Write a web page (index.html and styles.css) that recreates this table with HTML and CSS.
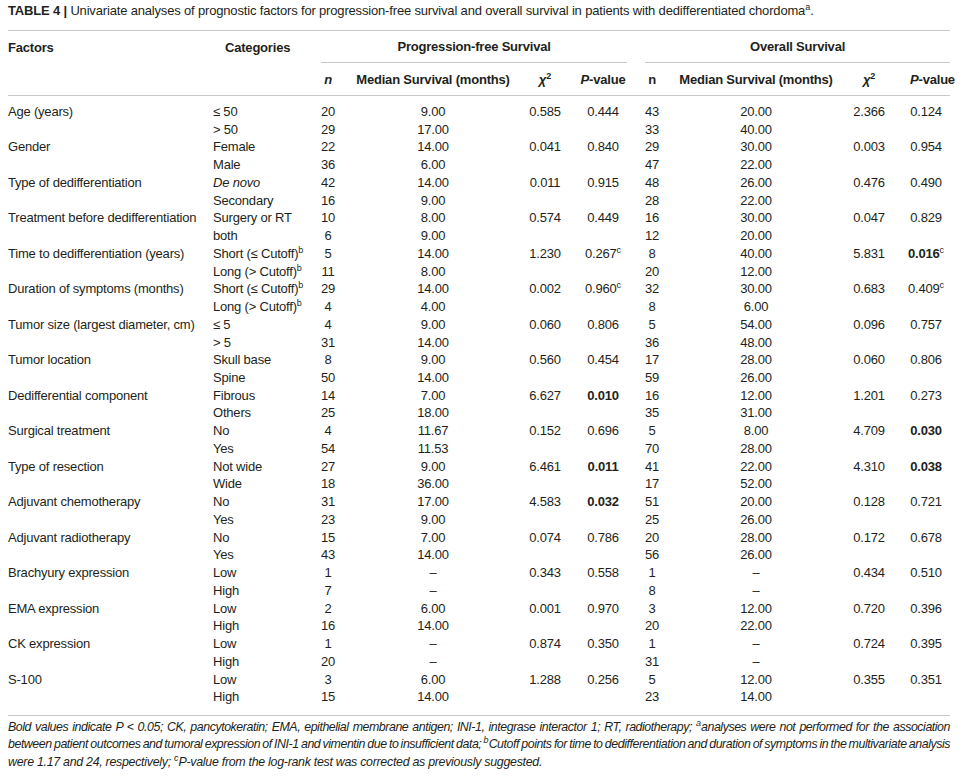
FILE: index.html
```html
<!DOCTYPE html>
<html lang="en">
<head>
<meta charset="utf-8">
<title>Table 4</title>
<link rel="stylesheet" href="styles.css">
</head>
<body>
<div class="page">
  <p class="title"><b>TABLE 4 | </b>Univariate analyses of prognostic factors for progression-free survival and overall survival in patients with dedifferentiated chordoma<sup class="s">a</sup>.</p>
  <table class="tbl">
    <colgroup>
      <col class="w-fac"><col class="w-cat"><col class="w-n1"><col class="w-m1"><col class="w-x1"><col class="w-p1"><col class="w-n2"><col class="w-m2"><col class="w-x2"><col class="w-p2">
    </colgroup>
    <thead>
      <tr class="h1">
        <th class="fac">Factors</th>
        <th class="cat">Categories</th>
        <th colspan="4" class="grp"><div class="grp-pfs">Progression-free Survival</div></th>
        <th colspan="4" class="grp"><div class="grp-os">Overall Survival</div></th>
      </tr>
      <tr class="h2">
        <th></th>
        <th></th>
        <th><i>n</i></th>
        <th>Median Survival (months)</th>
        <th><i>χ</i><sup class="s">2</sup></th>
        <th><i>P</i>-value</th>
        <th>n</th>
        <th>Median Survival (months)</th>
        <th class="x2"><i>χ</i><sup class="s">2</sup></th>
        <th class="p2h"><i>P</i>-value</th>
      </tr>
    </thead>
    <tbody>
      <tr class="first"><td>Age (years)</td><td>≤ 50</td><td>20</td><td>9.00</td><td>0.585</td><td>0.444</td><td>43</td><td>20.00</td><td class="x2">2.366</td><td>0.124</td></tr>
      <tr><td></td><td>&gt; 50</td><td>29</td><td>17.00</td><td></td><td></td><td>33</td><td>40.00</td><td class="x2"></td><td></td></tr>
      <tr><td>Gender</td><td>Female</td><td>22</td><td>14.00</td><td>0.041</td><td>0.840</td><td>29</td><td>30.00</td><td class="x2">0.003</td><td>0.954</td></tr>
      <tr><td></td><td>Male</td><td>36</td><td>6.00</td><td></td><td></td><td>47</td><td>22.00</td><td class="x2"></td><td></td></tr>
      <tr><td>Type of dedifferentiation</td><td><i>De novo</i></td><td>42</td><td>14.00</td><td>0.011</td><td>0.915</td><td>48</td><td>26.00</td><td class="x2">0.476</td><td>0.490</td></tr>
      <tr><td></td><td>Secondary</td><td>16</td><td>9.00</td><td></td><td></td><td>28</td><td>22.00</td><td class="x2"></td><td></td></tr>
      <tr><td>Treatment before dedifferentiation</td><td>Surgery or RT</td><td>10</td><td>8.00</td><td>0.574</td><td>0.449</td><td>16</td><td>30.00</td><td class="x2">0.047</td><td>0.829</td></tr>
      <tr><td></td><td>both</td><td>6</td><td>9.00</td><td></td><td></td><td>12</td><td>20.00</td><td class="x2"></td><td></td></tr>
      <tr><td>Time to dedifferentiation (years)</td><td>Short (≤ Cutoff)<sup class="s">b</sup></td><td>5</td><td>14.00</td><td>1.230</td><td>0.267<sup class="s">c</sup></td><td>8</td><td>40.00</td><td class="x2">5.831</td><td><b>0.016</b><sup class="s">c</sup></td></tr>
      <tr><td></td><td>Long (&gt; Cutoff)<sup class="s">b</sup></td><td>11</td><td>8.00</td><td></td><td></td><td>20</td><td>12.00</td><td class="x2"></td><td></td></tr>
      <tr><td>Duration of symptoms (months)</td><td>Short (≤ Cutoff)<sup class="s">b</sup></td><td>29</td><td>14.00</td><td>0.002</td><td>0.960<sup class="s">c</sup></td><td>32</td><td>30.00</td><td class="x2">0.683</td><td>0.409<sup class="s">c</sup></td></tr>
      <tr><td></td><td>Long (&gt; Cutoff)<sup class="s">b</sup></td><td>4</td><td>4.00</td><td></td><td></td><td>8</td><td>6.00</td><td class="x2"></td><td></td></tr>
      <tr><td>Tumor size (largest diameter, cm)</td><td>≤ 5</td><td>4</td><td>9.00</td><td>0.060</td><td>0.806</td><td>5</td><td>54.00</td><td class="x2">0.096</td><td>0.757</td></tr>
      <tr><td></td><td>&gt; 5</td><td>31</td><td>14.00</td><td></td><td></td><td>36</td><td>48.00</td><td class="x2"></td><td></td></tr>
      <tr><td>Tumor location</td><td>Skull base</td><td>8</td><td>9.00</td><td>0.560</td><td>0.454</td><td>17</td><td>28.00</td><td class="x2">0.060</td><td>0.806</td></tr>
      <tr><td></td><td>Spine</td><td>50</td><td>14.00</td><td></td><td></td><td>59</td><td>26.00</td><td class="x2"></td><td></td></tr>
      <tr><td>Dedifferential component</td><td>Fibrous</td><td>14</td><td>7.00</td><td>6.627</td><td><b>0.010</b></td><td>16</td><td>12.00</td><td class="x2">1.201</td><td>0.273</td></tr>
      <tr><td></td><td>Others</td><td>25</td><td>18.00</td><td></td><td></td><td>35</td><td>31.00</td><td class="x2"></td><td></td></tr>
      <tr><td>Surgical treatment</td><td>No</td><td>4</td><td>11.67</td><td>0.152</td><td>0.696</td><td>5</td><td>8.00</td><td class="x2">4.709</td><td><b>0.030</b></td></tr>
      <tr><td></td><td>Yes</td><td>54</td><td>11.53</td><td></td><td></td><td>70</td><td>28.00</td><td class="x2"></td><td></td></tr>
      <tr><td>Type of resection</td><td>Not wide</td><td>27</td><td>9.00</td><td>6.461</td><td><b>0.011</b></td><td>41</td><td>22.00</td><td class="x2">4.310</td><td><b>0.038</b></td></tr>
      <tr><td></td><td>Wide</td><td>18</td><td>36.00</td><td></td><td></td><td>17</td><td>52.00</td><td class="x2"></td><td></td></tr>
      <tr><td>Adjuvant chemotherapy</td><td>No</td><td>31</td><td>17.00</td><td>4.583</td><td><b>0.032</b></td><td>51</td><td>20.00</td><td class="x2">0.128</td><td>0.721</td></tr>
      <tr><td></td><td>Yes</td><td>23</td><td>9.00</td><td></td><td></td><td>25</td><td>26.00</td><td class="x2"></td><td></td></tr>
      <tr><td>Adjuvant radiotherapy</td><td>No</td><td>15</td><td>7.00</td><td>0.074</td><td>0.786</td><td>20</td><td>28.00</td><td class="x2">0.172</td><td>0.678</td></tr>
      <tr><td></td><td>Yes</td><td>43</td><td>14.00</td><td></td><td></td><td>56</td><td>26.00</td><td class="x2"></td><td></td></tr>
      <tr><td>Brachyury expression</td><td>Low</td><td>1</td><td>–</td><td>0.343</td><td>0.558</td><td>1</td><td>–</td><td class="x2">0.434</td><td>0.510</td></tr>
      <tr><td></td><td>High</td><td>7</td><td>–</td><td></td><td></td><td>8</td><td>–</td><td class="x2"></td><td></td></tr>
      <tr><td>EMA expression</td><td>Low</td><td>2</td><td>6.00</td><td>0.001</td><td>0.970</td><td>3</td><td>12.00</td><td class="x2">0.720</td><td>0.396</td></tr>
      <tr><td></td><td>High</td><td>16</td><td>14.00</td><td></td><td></td><td>20</td><td>22.00</td><td class="x2"></td><td></td></tr>
      <tr><td>CK expression</td><td>Low</td><td>1</td><td>–</td><td>0.874</td><td>0.350</td><td>1</td><td>–</td><td class="x2">0.724</td><td>0.395</td></tr>
      <tr><td></td><td>High</td><td>20</td><td>–</td><td></td><td></td><td>31</td><td>–</td><td class="x2"></td><td></td></tr>
      <tr><td>S-100</td><td>Low</td><td>3</td><td>6.00</td><td>1.288</td><td>0.256</td><td>5</td><td>12.00</td><td class="x2">0.355</td><td>0.351</td></tr>
      <tr class="last"><td></td><td>High</td><td>15</td><td>14.00</td><td></td><td></td><td>23</td><td>14.00</td><td class="x2"></td><td></td></tr>
    </tbody>
  </table>
  <div class="notes">
    <span class="line just">Bold values indicate <i>P</i> &lt; 0.05; CK, pancytokeratin; EMA, epithelial membrane antigen; INI-1, integrase interactor 1; RT, radiotherapy; <sup class="s">a</sup>analyses were not performed for the association</span>
    <span class="line just tight">between patient outcomes and tumoral expression of INI-1 and vimentin due to insufficient data; <sup class="s">b</sup>Cutoff points for time to dedifferentiation and duration of symptoms in the multivariate analysis</span>
    <span class="line wide">were 1.17 and 24, respectively; <sup class="s">c</sup>P-value from the log-rank test was corrected as previously suggested.</span>
  </div>
</div>
</body>
</html>
```

FILE: styles.css
```css
body {
  margin: 0;
  background: #ffffff;
  color: #231f20;
  font-family: "Liberation Sans", Arial, sans-serif;
}

.page {
  width: 942px;
  padding: 2px 0 0 8px;
}

.title {
  margin: 0;
  font-size: 13px;
  line-height: 17px;
  letter-spacing: -0.17px;
}

.s {
  font-size: 9px;
  line-height: 0;
  vertical-align: 5px;
  letter-spacing: 0;
}

.tbl {
  margin-top: 11px;
  width: 942px;
  table-layout: fixed;
  border-collapse: collapse;
  border-top: 1px solid #c8c8c8;
  font-size: 13px;
  letter-spacing: -0.2px;
}

.w-fac { width: 205px; }
.w-cat { width: 101px; }
.w-n1 { width: 28px; }
.w-m1 { width: 182px; }
.w-x1 { width: 42px; }
.w-p1 { width: 74px; }
.w-n2 { width: 24px; }
.w-m2 { width: 184px; }
.w-x2 { width: 54px; }
.w-p2 { width: 48px; }

.tbl th {
  padding: 0;
  font-weight: bold;
  text-align: center;
  white-space: nowrap;
  vertical-align: middle;
}

.tbl .h1 th {
  height: 32px;
  line-height: 31px;
}

.tbl .h1 th.fac {
  text-align: left;
}

.tbl .h1 th.cat {
  text-align: left;
  padding-left: 12px;
}

.grp-pfs,
.grp-os {
  line-height: 31px;
  border-bottom: 1px solid #c8c8c8;
}

.grp-pfs {
  margin: 0 13px 0 7px;
}

.grp-os {
  margin: 0 0 0 5px;
}

.tbl .h2 th {
  height: 32px;
  line-height: 31px;
  border-bottom: 1px solid #c8c8c8;
}

.tbl th.x2 {
  padding-right: 12px;
}

.tbl th.p2h {
  padding-left: 8px;
}

.tbl td {
  padding: 0;
  line-height: 17.73px;
  height: 17.73px;
  text-align: center;
  white-space: nowrap;
}

.tbl td:nth-child(1),
.tbl td:nth-child(2) {
  text-align: left;
}

.tbl td.x2 {
  padding-right: 12px;
}

.tbl tr.first td {
  padding-top: 7px;
}

.tbl tr.last td {
  padding-bottom: 9px;
  border-bottom: 1px solid #c8c8c8;
}

.notes {
  padding-top: 3px;
  font-size: 12.4px;
  font-style: italic;
  line-height: 17.5px;
  letter-spacing: -0.45px;
}

.notes .line {
  display: block;
  white-space: nowrap;
}

.notes .line.just {
  text-align: justify;
  text-align-last: justify;
  white-space: normal;
}

.notes .line.tight {
  word-spacing: -2.5px;
}

.notes .line.wide {
  letter-spacing: -0.28px;
}
```
